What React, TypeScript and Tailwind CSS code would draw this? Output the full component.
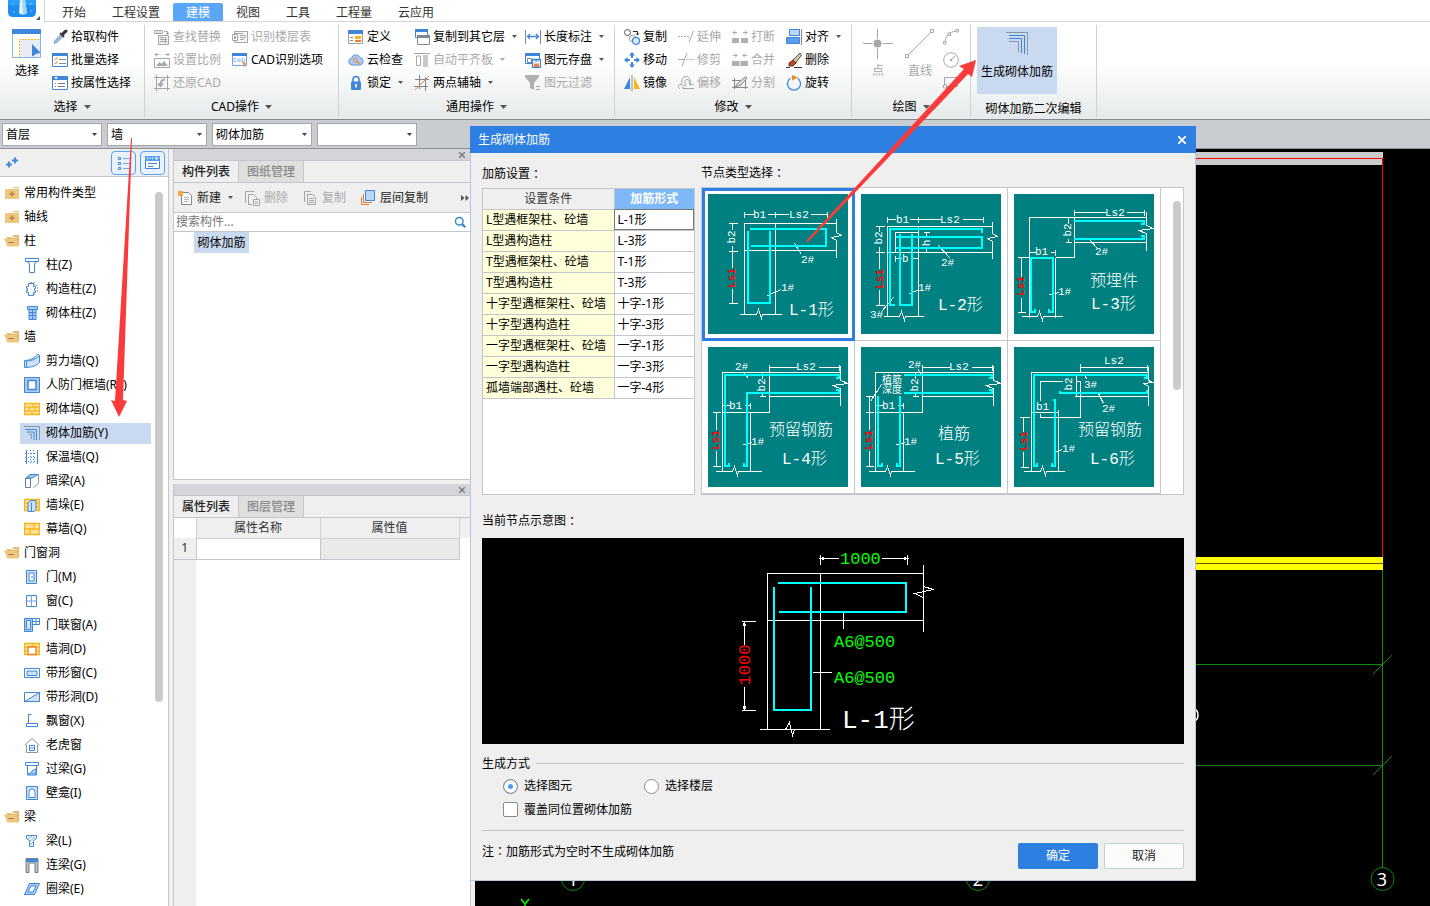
import React from "react";

type Kids = { children?: React.ReactNode };

const B = "#3f86d8";
const G = "#a6a6a6";
const D = "#7d8a94";
const Y = "#fbb416";

function Ic({ children, size = "size-4" }: Kids & { size?: string }) {
  return (
    <svg viewBox="0 0 16 16" className={`${size} shrink-0`} fill="none" aria-hidden="true">
      {children}
    </svg>
  );
}

function Caret({ color = "#555", size = "h-1 w-[7px]" }: { color?: string; size?: string }) {
  return (
    <svg viewBox="0 0 7 4" className={`shrink-0 ${size}`} aria-hidden="true">
      <path d="M0 0h7L3.500 4z" fill={color} />
    </svg>
  );
}

function Colon() {
  return <span className="font-['Noto_Sans_CJK_TC',sans-serif]">：</span>;
}

/* ---------- ribbon icons ---------- */

const icons = {
  pick: (
    <Ic>
      <path d="M2 14.500l1-3 6-6 2 2-6 6z" fill="#8fc0f0" stroke="#7a8fa5" strokeWidth=".8" />
      <path d="M8 4l4 4M10 5.500l3-3.500" stroke="#444" strokeWidth="2" />
      <path d="M11 5l3-3" stroke="#333" strokeWidth="3" strokeLinecap="round" />
    </Ic>
  ),
  batch: (
    <Ic>
      <path d="M.5 1.500h15v13H.5z" fill="#fff" stroke={B} />
      <path d="M0 1h16v3H0z" fill={B} />
      <path d="M2.500 6.500l1 1.500 2-2.500M2.500 10.500l1 1.500 2-2.500" stroke="#e88a24" />
      <path d="M7 7.500h7M7 11.500h7" stroke="#888" />
    </Ic>
  ),
  attr: (
    <Ic>
      <path d="M.5 1.500h15v13H.5z" fill="#fff" stroke={B} />
      <path d="M0 1h16v4H0z" fill={B} />
      <path d="M2 2h4L4 4.500z" fill="#fff" />
      <path d="M3 8.500h1M6 8.500h7M3 11.500h1M6 11.500h7" stroke="#777" />
    </Ic>
  ),
  find: (
    <Ic>
      <path d="M.5 1.500h8v3h-8zM3 2v2M6 2v2M10 2.500h3.500v3M12 4l1.500 1.500L15 4" stroke={G} />
      <path d="M4.500 6.500h10v9h-10z" fill="#eee" stroke={G} />
      <path d="M6 8.500h4M6 10.500h7M6 12.500h7M11.500 8v6" stroke={G} />
    </Ic>
  ),
  scale: (
    <Ic>
      <path d="M.5 6.500h15v9H.5zM1 2.500h4M11 2.500h4M2.500 1L1 2.500 2.500 4M13.500 1L15 2.500 13.500 4" stroke={G} />
      <path d="M2 14l3.500-4 2 2 2.500-3 4 5z" fill={G} />
    </Ic>
  ),
  restore: (
    <Ic>
      <path d="M2.500 0v16M13.500 0v16M0 2.500h16M0 13.500h16" stroke={G} />
      <path d="M11 4.500C7 4.500 6.500 7 6.500 10M4 8.500L6.500 11 9 8.500" stroke={G} strokeWidth="1.800" />
    </Ic>
  ),
  floorTable: (
    <Ic>
      <path d="M2.500 2.500h13v11h-13z" fill="#f6f6f6" stroke={G} />
      <path d="M.5 5.500h5v6h-5z" fill="#fff" stroke={G} />
      <path d="M2 7h2v3H2z" fill={G} />
      <path d="M8 6.500h6M8 8.500h6M8 10.500h4M3 4.500h8" stroke={G} />
    </Ic>
  ),
  cadOpt: (
    <Ic>
      <path d="M.5 1.500h14v12H.5z" fill="#fff" stroke="#6da7e8" />
      <path d="M0 1h15v3H0z" fill={B} />
      <path d="M4.500 6.500H2v3h2.500M6 10V7.500l1-1 1 1V10M6 9h2M10 6.500v3.500h1.500l1-1V7.500l-1-1z" stroke="#7fb2ec" strokeWidth=".9" />
      <path d="M10 9l5 3-2 .7.500 2.300-2-1z" fill="#f08a55" />
    </Ic>
  ),
  define: (
    <Ic>
      <path d="M.5 1.500h14v13H.5z" fill="#fff" stroke="#9aa3ab" />
      <path d="M0 1h15v4H0z" fill={B} />
      <path d="M2 8.500h3M2 11.500h3" stroke="#7d8a94" />
      <path d="M7 7h6v3H7z" fill={Y} />
      <path d="M7 11h6v2H7z" fill="#f07e2b" />
    </Ic>
  ),
  cloud: (
    <Ic>
      <path d="M4 13a3.500 3.500 0 01-.5-6.900 4.500 4.500 0 018.500-.6A3.800 3.800 0 0112 13z" fill="#a9cdf5" stroke="#5b9be6" />
      <circle cx="7.500" cy="8" r="2" stroke="#f0823a" />
      <path d="M9 9.500l3 3" stroke="#f0823a" strokeWidth="1.300" />
    </Ic>
  ),
  lock: (
    <Ic>
      <path d="M5 7V4.500a3 3 0 016 0V7" stroke={B} strokeWidth="1.600" />
      <rect x="3" y="6.500" width="10" height="8.500" rx="1" fill={B} />
      <path d="M8 9v3.500" stroke="#fff" strokeWidth="1.600" />
    </Ic>
  ),
  copyFloor: (
    <Ic>
      <path d="M1.500.5h12v8h-12z" fill="#fff" stroke={B} />
      <path d="M1 0h13v3H1z" fill={B} />
      <path d="M3.500 6.500h12v9h-12z" fill="#fff" stroke={D} />
      <path d="M3 6h13v3H3z" fill={D} />
    </Ic>
  ),
  alignSlab: (
    <Ic>
      <path d="M0 1.500h16M2.500 4v9.500h4V4z" stroke={G} />
      <path d="M9 3h5v12H9z" fill="#c9c9c9" />
    </Ic>
  ),
  axis: (
    <Ic>
      <path d="M5.500 0v14M11.500 2v14M1 4.500h14M0 11.500h14" stroke={D} />
      <path d="M1 15L15 1" stroke="#f0823a" />
    </Ic>
  ),
  length: (
    <Ic>
      <path d="M.5 1v14M15.500 1v14" stroke={D} />
      <path d="M2 7.500h12M5 5L2.500 7.500 5 10M11 5l2.500 2.500L11 10" stroke={B} strokeWidth="1.300" />
    </Ic>
  ),
  save: (
    <Ic>
      <path d="M.5 1.500h14v10H.5z" fill="#fff" stroke={B} />
      <path d="M0 1h15v3H0z" fill={B} />
      <path d="M2.500 6.500h4v4h-4z" stroke={D} />
      <path d="M7.500 7.500h8v8h-8z" fill="#fff" stroke={B} strokeWidth="1.300" />
      <path d="M9 11.500h5V15H9z" fill="#f0823a" />
      <path d="M9.500 9h4" stroke={B} />
    </Ic>
  ),
  filter: (
    <Ic>
      <path d="M0 0h14v2L9 8v7l-4-2V8L0 2z" fill="#b0b0b0" />
      <path d="M11 11.500h4M11 14.500h4" stroke={G} />
    </Ic>
  ),
  copy: (
    <Ic>
      <circle cx="3.500" cy="3.500" r="3" stroke="#555" />
      <circle cx="8.500" cy="9.500" r="3.200" stroke="#999" />
      <circle cx="12" cy="11.800" r="3.500" fill="#d8eaff" stroke={B} strokeWidth="1.200" />
      <path d="M9 2.500h4.500V6M12 4.500L13.500 6 15 4.500" stroke="#222" />
    </Ic>
  ),
  move: (
    <Ic>
      <path d="M8 2v4M8 10v4M2 8h4M10 8h4" stroke={B} strokeWidth="2" />
      <path d="M8 0l3 3.500H5zM8 16l3-3.500H5zM0 8l3.500-3v6zM16 8l-3.500-3v6z" fill={B} />
    </Ic>
  ),
  mirror: (
    <Ic>
      <path d="M6 2v12H0z" fill={B} />
      <path d="M10 2v12h6z" fill={Y} />
      <path d="M8 0v16" stroke="#888" />
    </Ic>
  ),
  extend: (
    <Ic>
      <path d="M0 7.500h2M3 7.500h2M6 7.500h2M9 7.500h2M15.500 2L11 13" stroke={G} />
    </Ic>
  ),
  trim: (
    <Ic>
      <path d="M0 7.500h6M8.500 7.500h2M11.500 7.500h2M14.500 7.500h2M9 1L4 14" stroke={G} />
    </Ic>
  ),
  offset: (
    <Ic>
      <path d="M2 13.500C0 13.500 0 9.500 2 9.500h2C3 4 5 1.500 8 1.500S13 4 12 9.500M5 13.500h11M5 13.500c-1-3 1-3 2.500-3C6.500 6 7 4.500 9 4.500s3 2 2.500 5h4" stroke={G} />
    </Ic>
  ),
  brk: (
    <Ic>
      <path d="M0 9h7v5H0zM9 9h7v5H9z" fill="#b0b0b0" />
      <path d="M1 3.500h4M11 3.500h4M3 1.500L1 3.500l2 2M13 1.500l2 2-2 2" stroke={G} />
    </Ic>
  ),
  merge: (
    <Ic>
      <path d="M0 9h7.500v5H0zM8.500 9H16v5H8.500z" fill="#b0b0b0" />
      <path d="M1 3.500h4M11 3.500h4M3 1.500l2 2-2 2M13 1.500l-2 2 2 2" stroke={G} />
    </Ic>
  ),
  split: (
    <Ic>
      <path d="M2.500 3v11M13.500 5v9M0 5.500h12M0 12.500h16" stroke="#888" />
      <path d="M3 12l3-4 7-6 2 1-6 7z" fill="#ddd" stroke="#888" />
    </Ic>
  ),
  align: (
    <Ic>
      <path d="M3.500.500h10v6h-10z" fill="#b8d6f8" stroke={B} />
      <path d="M.5 8.500h13v6H.5z" fill="#5a9fea" stroke={B} />
      <path d="M15.500 0v16" stroke={D} />
    </Ic>
  ),
  erase: (
    <Ic>
      <path d="M6 9l8-8 1.500 2L9 12z" fill="#d8c7a0" stroke="#333" strokeWidth=".8" />
      <path d="M3 11l4-3 3 3-3 3-4 0z" fill="#c7481b" stroke="#40200c" strokeWidth=".8" />
      <path d="M0 15.500h4M8 15.500h8" stroke="#333" />
    </Ic>
  ),
  rotate: (
    <Ic>
      <path d="M4 3.500a6.500 6.500 0 108 0" stroke={B} strokeWidth="1.300" />
      <path d="M4 3.500A6.500 6.500 0 0112 3.500" stroke="#9cc6f5" />
      <path d="M6 0l6 2.500L6 5.500z" fill="#f08a24" />
    </Ic>
  ),
  arc: (
    <Ic>
      <path d="M2 13C2.500 7 6 3 13 2" stroke={G} />
      <path d="M.5 12.500h2.500v2.500H.5zM5 4h2.500v2.500H5zM13 .5h2.500V3H13z" fill="#fff" stroke={G} />
    </Ic>
  ),
  circle: (
    <Ic>
      <circle cx="8" cy="8" r="7.300" stroke={G} />
      <path d="M8 8l4-4" stroke={G} />
      <path d="M7 7h2v2H7z" fill={G} />
    </Ic>
  ),
  rect: (
    <Ic>
      <path d="M1.500 2.500h13v9h-13z" stroke={G} />
      <path d="M.5 10h3v3h-3z" fill="#fff" stroke={G} />
    </Ic>
  ),
};

type IconName = keyof typeof icons;

function Tool({ icon, label, off, arrow }: { icon: IconName; label?: string; off?: boolean; arrow?: boolean }) {
  return (
    <button type="button" disabled={off} className={`flex h-[23px] items-center gap-[3px] whitespace-nowrap ${off ? "text-[#a9a9a9]" : "text-black"}`}>
      {icons[icon]}
      {label && <span>{label}</span>}
      {arrow && (
        <span className="ml-1 flex">
          <Caret color={off ? "#aaa" : "#555"} size="h-[3px] w-[5px]" />
        </span>
      )}
    </button>
  );
}

function Group({ label, width, pad, children, caret = true }: Kids & { label: string; width: string; pad: string; caret?: boolean }) {
  return (
    <section className={`flex shrink-0 flex-col border-r border-[#cfd1d3] ${width}`}>
      <div className={`flex h-[69px] ${pad}`}>{children}</div>
      <div className={`flex h-6 items-center justify-center gap-1.5 ${caret ? "pt-0.5" : "pt-1.5"}`}>
        <span>{label}</span>
        {caret && <Caret />}
      </div>
    </section>
  );
}

function Ribbon() {
  return (
    <div className="flex h-[98px] shrink-0 overflow-hidden border-b border-[#85888c] bg-linear-to-b from-white from-40% to-[#e6eaea] pt-[3px] pb-0.5">
      <Group label="选择" width="w-[145px]" pad="gap-2.5 pl-3">
        <button type="button" className="flex w-[30px] flex-col items-center gap-1 pt-1">
          <svg viewBox="0 0 30 30" className="size-[30px]" aria-hidden="true">
            <path d="M.5.5h28v28H.5z" fill="#fff" stroke="#86b3e6" />
            <path d="M0 0h29v5H0z" fill={B} />
            <path d="M8 11h20v17H8z" fill="#e9edf6" />
            <path d="M7.500 29V10.500H28" fill="none" stroke={Y} strokeDasharray="2 1" />
            <path d="M20 15l9 9-4 .5-5 3z" fill={B} />
          </svg>
          <span>选择</span>
        </button>
        <div>
          <Tool icon="pick" label="拾取构件" />
          <Tool icon="batch" label="批量选择" />
          <Tool icon="attr" label="按属性选择" />
        </div>
      </Group>
      <Group label="CAD操作" width="w-[194px]" pad="gap-[11px] pl-[9px]">
        <div>
          <Tool icon="find" label="查找替换" off />
          <Tool icon="scale" label="设置比例" off />
          <Tool icon="restore" label="还原CAD" off />
        </div>
        <div>
          <Tool icon="floorTable" label="识别楼层表" off />
          <Tool icon="cadOpt" label="CAD识别选项" />
        </div>
      </Group>
      <Group label="通用操作" width="w-[276px]" pad="pl-[9px]">
        <div className="w-[66px]">
          <Tool icon="define" label="定义" />
          <Tool icon="cloud" label="云检查" />
          <Tool icon="lock" label="锁定" arrow />
        </div>
        <div className="w-[111px]">
          <Tool icon="copyFloor" label="复制到其它层" arrow />
          <Tool icon="alignSlab" label="自动平齐板" off arrow />
          <Tool icon="axis" label="两点辅轴" arrow />
        </div>
        <div>
          <Tool icon="length" label="长度标注" arrow />
          <Tool icon="save" label="图元存盘" arrow />
          <Tool icon="filter" label="图元过滤" off />
        </div>
      </Group>
      <Group label="修改" width="w-[237px]" pad="gap-[11px] pl-[9px]">
        <div>
          <Tool icon="copy" label="复制" />
          <Tool icon="move" label="移动" />
          <Tool icon="mirror" label="镜像" />
        </div>
        <div>
          <Tool icon="extend" label="延伸" off />
          <Tool icon="trim" label="修剪" off />
          <Tool icon="offset" label="偏移" off />
        </div>
        <div>
          <Tool icon="brk" label="打断" off />
          <Tool icon="merge" label="合并" off />
          <Tool icon="split" label="分割" off />
        </div>
        <div>
          <Tool icon="align" label="对齐" arrow />
          <Tool icon="erase" label="删除" />
          <Tool icon="rotate" label="旋转" />
        </div>
      </Group>
      <Group label="绘图" width="w-[119px]" pad="pl-[11px]">
        <button type="button" disabled className="mr-3 flex w-[30px] flex-col items-center gap-1 pt-1 text-[#a9a9a9]">
          <svg viewBox="0 0 30 30" className="size-[30px]" aria-hidden="true">
            <path d="M0 14.500h30M14.500 0v30" stroke={G} />
            <circle cx="14.500" cy="14.500" r="4.500" fill={G} stroke="#fff" />
          </svg>
          <span>点</span>
        </button>
        <button type="button" disabled className="mr-2 flex w-[30px] flex-col items-center gap-1 pt-1 text-[#a9a9a9]">
          <svg viewBox="0 0 30 30" className="size-[30px]" fill="none" aria-hidden="true">
            <path d="M3 26L26 3" stroke={G} />
            <path d="M.5 25.500h3v3h-3zM25.500.5h3v3h-3z" fill="#fff" stroke={G} />
          </svg>
          <span>直线</span>
        </button>
        <div>
          <Tool icon="arc" off />
          <Tool icon="circle" off />
          <Tool icon="rect" off />
        </div>
      </Group>
      <Group label="砌体加筋二次编辑" width="w-[126px]" pad="pt-0.5 pl-1.5" caret={false}>
        <button type="button" className="flex h-[67px] w-20 flex-col items-center gap-2 bg-[#c9d9ef] pt-[5px] text-black">
          <svg viewBox="0 0 24 24" className="size-6" fill="none" aria-hidden="true">
            <path d="M1 .5h21.500V23M4 9.500h9.500V20" stroke="#8795a5" />
            <path d="M4 3.500h15.500V22M4 6.500h12.500V21" stroke={B} />
          </svg>
          <span>生成砌体加筋</span>
        </button>
      </Group>
    </div>
  );
}

/* ---------- component tree ---------- */

const brick = (
  <>
    <path d="M.5 2.500h15v11H.5z" fill="#ffe2a0" stroke={Y} strokeWidth="1.400" />
    <path d="M0 6.200h16M0 9.800h16M9 2.500v3.700M5 6.200v3.600M11 6.200v3.600M8 9.800v3.700" stroke={Y} strokeWidth="1.200" />
  </>
);

const treeIcons: Record<string, React.ReactNode> = {
  column: <path d="M1.500 1.500h13v3h-13zM3 4.500h10l-2.500 2v9h-5v-9z" fill="#fff" stroke={B} />,
  tie: (
    <>
      <path d="M6 1.500h5v3h2.500v6H11v3H6" stroke="#aaa" strokeDasharray="2 1" />
      <path d="M4.500 2.500h5v3h2v2h-1v2h1v2h-2v3h-5v-3h-2v-2h1v-2h-1v-2h2z" fill="#fff" stroke={B} />
    </>
  ),
  brickCol: (
    <>
      <path d="M3.500 1.500h10v3h-10zM5 4.500h7v10H5z" fill="#a9cbf3" stroke={B} />
      <path d="M5 7.500h7M5 10.500h7M8.500 5v10" stroke={B} />
    </>
  ),
  shear: (
    <>
      <path d="M.5 7.500C6 7.500 11 5 13.500 1l2 1.500V9C13 13 7 14.500.5 14.500z" fill="#cfe2fa" stroke={B} />
      <path d="M2.500 8v6.500M2.500 8C8 8 12 6 15.500 2.500" stroke={B} />
    </>
  ),
  frame: (
    <>
      <path d="M.5.500h15v15H.5z" fill="#a9cbf3" stroke={B} />
      <path d="M4 3.500h8v9H4z" fill="#fff" stroke={B} strokeWidth="1.500" />
    </>
  ),
  brick,
  rebar: (
    <>
      <path d="M0 1.500h15.500V15M5 9.500h2.500V14" stroke="#8795a5" />
      <path d="M1 4.500h11.500V15M3 7h7v8" stroke={B} />
    </>
  ),
  insul: (
    <>
      <path d="M2.500 1v14M13.500 1v14" stroke={B} />
      <path d="M6.500 1v14M9.500 1v14" stroke={B} strokeDasharray="1 2" />
      <path d="M1 4.500h14M1 8.500h14M1 12.500h14" stroke={B} strokeDasharray="1 2" />
    </>
  ),
  hidden: (
    <>
      <path d="M1.500 5.500l5-4h8v9l-5 4" stroke="#8795a5" />
      <path d="M1.500 5.500h5v9h-5z" fill="#fff" stroke="#6b7f94" />
      <path d="M2 5l4-3.500h8L8 5z" fill="#a9cbf3" stroke={B} />
    </>
  ),
  pier: (
    <>
      {brick}
      <path d="M4 5.500l3-2h5v9l-2 2H4z" fill="#cfe2fa" stroke={B} />
      <path d="M7.500 5.500v9" stroke={B} />
    </>
  ),
  curtain: (
    <>
      <path d="M.5 2.500h15v11H.5z" fill="#ffe2a0" stroke={Y} strokeWidth="1.400" />
      <path d="M0 8h16M10 2.500V8M6 8v5.500" stroke={Y} strokeWidth="1.400" />
    </>
  ),
  door: (
    <>
      <path d="M2.500 1.500h10v13h-10z" fill="#cfe2fa" stroke={B} />
      <path d="M5 4h5v8H5z" fill="#fff" stroke={B} />
      <path d="M8 7v2" stroke={B} />
    </>
  ),
  window: (
    <>
      <path d="M2.500 2.500h10v11h-10z" fill="#fff" stroke={B} />
      <path d="M7.500 2.500v11M2.500 8h10" stroke="#6da7e8" />
    </>
  ),
  doorWin: (
    <>
      <path d="M.5 1.500h8v13h-8z" fill="#a9cbf3" stroke={B} />
      <path d="M2.500 3.500h4v9h-4z" fill="#dbe9fb" stroke={B} />
      <path d="M8.500 1.500h7v6h-7M12 1.500v6M8.500 4.500h7" stroke={B} />
    </>
  ),
  wallHole: (
    <>
      {brick}
      <path d="M4 6h8v7.500H4z" fill="#fff" stroke="#f07e2b" strokeWidth="1.300" />
    </>
  ),
  strip: (
    <>
      <path d="M.5 3.500h15v9H.5z" fill="#fff" stroke={B} />
      <path d="M3 6h10v4.500H3z" fill="#cfe2fa" stroke={B} />
    </>
  ),
  stripHole: (
    <>
      <path d="M.5 3.500h15v9H.5z" fill="#fff" stroke={B} />
      <path d="M.5 12.500l15-9v9z" fill="#cfe2fa" stroke={B} />
    </>
  ),
  bay: <path d="M7.500 1.500h-3v9h-2v3h11v-3h-9" stroke={B} />,
  dormer: (
    <>
      <path d="M.5 8.500L8 1.500l7.500 7M2.500 8v7.500h11V8" stroke="#8795a5" />
      <path d="M5.500 8.500h5v5h-5zM5.500 11h5" fill="#fff" stroke={B} />
    </>
  ),
  lintel: (
    <>
      <path d="M1.500 1.500h13v3h-13zM3.500 4.500h9v9.500h-9z" fill="#fff" stroke={B} />
      <path d="M4 13c3 0 3-4 8-5v5z" fill="#a9cbf3" stroke={B} />
    </>
  ),
  niche: (
    <>
      <path d="M2.500 1.500h11v13h-11z" fill="#cfe2fa" stroke={B} />
      <path d="M5 12.500V7a3 3 0 016 0v5.500z" fill="#fff" stroke={B} />
    </>
  ),
  beam: (
    <>
      <path d="M2.500 2.500h10v3l-3 2v6h-4v-6l-3-2z" fill="#fff" stroke={B} />
      <path d="M4 6l4-3M6 8l5-4M6 12l3-3" stroke="#6da7e8" />
    </>
  ),
  coupling: (
    <>
      <path d="M2 1.500h12v14h-3V6H5v9.500H2z" fill="#b9bfc5" stroke="#77828c" />
      <path d="M2 2h12v3H2z" fill={B} />
    </>
  ),
  ring: (
    <>
      <path d="M5.500 2.500h10l-5 11H.5z" fill="#a9cbf3" stroke={B} />
      <path d="M7 5h5l-3 6H4z" fill="#fff" stroke={B} />
    </>
  ),
};

type Node = { label: string; icon?: string; state?: "open" | "closed"; active?: boolean };

const tree: Node[] = [
  { label: "常用构件类型", state: "closed" },
  { label: "轴线", state: "closed" },
  { label: "柱", state: "open" },
  { label: "柱(Z)", icon: "column" },
  { label: "构造柱(Z)", icon: "tie" },
  { label: "砌体柱(Z)", icon: "brickCol" },
  { label: "墙", state: "open" },
  { label: "剪力墙(Q)", icon: "shear" },
  { label: "人防门框墙(RF)", icon: "frame" },
  { label: "砌体墙(Q)", icon: "brick" },
  { label: "砌体加筋(Y)", icon: "rebar", active: true },
  { label: "保温墙(Q)", icon: "insul" },
  { label: "暗梁(A)", icon: "hidden" },
  { label: "墙垛(E)", icon: "pier" },
  { label: "幕墙(Q)", icon: "curtain" },
  { label: "门窗洞", state: "open" },
  { label: "门(M)", icon: "door" },
  { label: "窗(C)", icon: "window" },
  { label: "门联窗(A)", icon: "doorWin" },
  { label: "墙洞(D)", icon: "wallHole" },
  { label: "带形窗(C)", icon: "strip" },
  { label: "带形洞(D)", icon: "stripHole" },
  { label: "飘窗(X)", icon: "bay" },
  { label: "老虎窗", icon: "dormer" },
  { label: "过梁(G)", icon: "lintel" },
  { label: "壁龛(I)", icon: "niche" },
  { label: "梁", state: "open" },
  { label: "梁(L)", icon: "beam" },
  { label: "连梁(G)", icon: "coupling" },
  { label: "圈梁(E)", icon: "ring" },
  { label: "", state: "closed" },
];

function Folder({ open }: { open: boolean }) {
  return (
    <Ic>
      {open ? (
        <>
          <path d="M3 4h5l1.500-2H15v11H3z" fill="#e0b468" />
          <path d="M9 3.500h5v1.500H5" fill="#fff" stroke="#e0b468" strokeWidth=".8" />
          <path d="M0 5.500h12.500l2.500 8H3.500z" fill="#efc67c" />
          <path d="M4.500 9.500h5" stroke="#9c7a33" />
        </>
      ) : (
        <>
          <path d="M1 4h7l1.500-2H15v12H1z" fill="#efc67c" />
          <path d="M7 3.500h8" stroke="#fff" strokeWidth=".8" />
          <path d="M8 6.500v5M5.500 9h5" stroke="#a8843c" strokeWidth="1.400" />
        </>
      )}
    </Ic>
  );
}

function Tree() {
  return (
    <aside className="flex w-[169px] shrink-0 flex-col overflow-hidden border-r border-[#c3c6cc] bg-white">
      <div className="flex h-7 shrink-0 items-center gap-1 border-b border-[#c3c6cc] bg-[#efefef] pr-[3px] pl-1">
        <Ic>
          <path d="M2 9.500h6M5 6.500v6M8 5.500h6M11 2.500v6" stroke={B} strokeWidth="1.800" />
        </Ic>
        <button type="button" className="ml-auto flex h-6 w-[25px] items-center justify-center rounded-sm border border-[#5aa2f2] bg-[#e8f2fd]">
          <Ic>
            <path d="M2.500 2.500h2v2h-2zM2.500 7.500h2v2h-2zM2.500 12.500h2v2h-2z" stroke={B} />
            <path d="M7 3.500h8M7 8.500h8M7 13.500h8" stroke="#6da7e8" />
          </Ic>
        </button>
        <button type="button" className="flex h-6 w-[25px] items-center justify-center rounded-sm border border-[#5aa2f2] bg-[#e8f2fd]">
          <Ic>
            <path d="M.5 1.500h14v12H.5z" fill="#fff" stroke={B} />
            <path d="M0 1h15v5H0z" fill="#5a9fea" />
            <path d="M2 2.500h1V4H2zM4.500 2.500h1V4h-1zM7 2.500h1V4H7zM9.500 2.500h4l-2 2.500z" fill="#fff" />
            <path d="M3 8.500h9M3 11.500h5" stroke={B} />
          </Ic>
        </button>
      </div>
      <div className="flex min-h-0 flex-1 overflow-hidden">
        <ul className="min-w-0 flex-1 pt-1">
          {tree.map((n, i) =>
            n.state ? (
              <li key={i} className="flex h-6 items-center gap-1 pl-1 text-black">
                <Folder open={n.state === "open"} />
                <span>{n.label}</span>
              </li>
            ) : (
              <li key={i} className="flex h-6 items-center pr-1 pl-5">
                <button type="button" className={`flex h-[21px] w-full items-center gap-1.5 pl-1 whitespace-nowrap text-black ${n.active ? "bg-[#c9d9ef]" : ""}`}>
                  <Ic>{treeIcons[n.icon as string]}</Ic>
                  <span>{n.label}</span>
                </button>
              </li>
            ),
          )}
        </ul>
        <div className="mt-[15px] mr-[5px] h-[510px] w-2 shrink-0 rounded-full bg-[#cbcbcb]" />
      </div>
    </aside>
  );
}

/* ---------- list and property panels ---------- */

function Cross() {
  return (
    <svg viewBox="0 0 6 6" className="size-1.5" aria-hidden="true">
      <path d="M0 0l6 6M6 0L0 6" stroke="#777" strokeWidth="1.300" />
    </svg>
  );
}

function PanelHead({ tabs }: { tabs: [string, string] }) {
  return (
    <>
      <div className="flex h-3 shrink-0 items-center justify-end border-b border-[#c3c6cc] bg-[#d4d5da] pr-[5px]">
        <button type="button" className="flex">
          <Cross />
        </button>
      </div>
      <div className="flex h-[22px] shrink-0 border-b border-[#c3c6cc] bg-[#efefef] font-medium">
        <button type="button" className="w-[65px] border-r border-[#c3c6cc] text-[#222]">{tabs[0]}</button>
        <button type="button" className="w-[65px] border-r border-[#c3c6cc] bg-[#dfdfdf] text-[#8a8a8a]">{tabs[1]}</button>
      </div>
    </>
  );
}

function Middle() {
  return (
    <div className="ml-1 flex w-[298px] shrink-0 flex-col gap-1">
      <section className="flex h-[331px] shrink-0 flex-col border border-t-0 border-[#c3c6cc] bg-white">
        <PanelHead tabs={["构件列表", "图纸管理"]} />
        <div className="flex h-[30px] shrink-0 items-center border-b border-[#c3c6cc] bg-[#efefef] pl-1 text-[#a9a9a9]">
          <button type="button" className="flex items-center gap-[3px] text-[#222]">
            <Ic>
              <path d="M3.500 2.500h7l3 3v9h-10z" fill="#fff" stroke={D} />
              <path d="M6 7.500h5M6 9.500h5M6 11.500h5" stroke="#bbb" />
              <path d="M0 1h5v5H0z" fill="#f6a640" />
            </Ic>
            新建
            <span className="ml-1 flex">
              <Caret size="h-[3px] w-[5px]" />
            </span>
          </button>
          <button type="button" disabled className="ml-3 flex items-center gap-[3px]">
            <Ic>
              <path d="M.5 13V1.500H9M3.500 15V4.500h5l3 3V9M3.500 14.500H7" stroke={G} />
              <path d="M8.500 9.500h6v6h-6zM10 11l3 3M13 11l-3 3" stroke={G} />
            </Ic>
            删除
          </button>
          <button type="button" disabled className="ml-[15px] flex items-center gap-[3px]">
            <Ic>
              <path d="M1.500 12V1.500H8M4.500 4.500h5l3 3v7h-8z" stroke={G} />
              <path d="M6 8.500h5M6 10.500h5M6 12.500h5" stroke={G} />
            </Ic>
            复制
          </button>
          <button type="button" className="ml-[15px] flex items-center gap-[3px] text-[#222]">
            <Ic>
              <path d="M4.500.500h9v10h-9z" fill="#b8d6f8" stroke={B} />
              <path d="M2.500 4v8.500H11M.5 7v7.500H8" stroke="#f07e2b" />
            </Ic>
            层间复制
          </button>
          <svg viewBox="0 0 8 6" className="mr-px ml-auto h-1.5 w-2" aria-hidden="true">
            <path d="M0 0l3.500 3L0 6zM4.500 0L8 3 4.500 6z" fill="#555" />
          </svg>
        </div>
        <div className="flex h-[19px] shrink-0 items-center border-b border-[#c3c6cc] pr-1 pl-0.5">
          <input aria-label="搜索构件..." placeholder="搜索构件..." className="h-4 min-w-0 flex-1 outline-none placeholder:text-[#777]" />
          <Ic size="size-3">
            <circle cx="7" cy="7" r="5" stroke="#2a86cc" strokeWidth="1.800" />
            <path d="M10.500 10.500l4.500 4.500" stroke="#2a86cc" strokeWidth="3" />
          </Ic>
        </div>
        <button type="button" className="ml-5 h-[21px] w-[55px] bg-[#c9d9ef] text-black">砌体加筋</button>
      </section>
      <section className="flex min-h-0 flex-1 flex-col border-x border-[#c3c6cc] bg-white">
        <PanelHead tabs={["属性列表", "图层管理"]} />
        <div className="flex flex-1 bg-linear-to-r from-[#efefef] from-[22px] to-white to-[22px]">
          <table className="h-[41px] w-full table-fixed border-collapse text-center text-[#333]">
            <colgroup>
              <col className="w-[22px]" />
              <col className="w-[124px]" />
              <col className="w-[139px]" />
              <col />
            </colgroup>
            <thead>
              <tr className="h-5 bg-[#efefef]">
                <th className="bg-white" />
                <th className="border border-t-0 border-[#cfd1d5] p-0 font-normal">属性名称</th>
                <th className="border border-t-0 border-[#cfd1d5] p-0 font-normal">属性值</th>
                <th />
              </tr>
            </thead>
            <tbody>
              <tr className="h-[21px]">
                <td className="border-b border-[#c3c6cc] bg-[#efefef] p-0">1</td>
                <td className="border border-[#c3c6cc] bg-white p-0" />
                <td className="border border-[#c3c6cc] bg-[#e9e9e9] p-0" />
                <td className="bg-white" />
              </tr>
            </tbody>
          </table>
        </div>
      </section>
    </div>
  );
}

/* ---------- drawing area ---------- */

function Canvas() {
  return (
    <div className="ml-1 min-w-0 flex-1 overflow-hidden bg-black">
      <svg className="size-full" fill="none" aria-hidden="true">
        <g transform="translate(-475 -149)">
          <path d="M475 152h908v13H475z" fill="#cbcbcb" />
          <path d="M475 158.500h907.500V557" stroke="#f00" />
          <path d="M475 557h908v13H475z" fill="#ff0" />
          <path d="M475 563.500h908" stroke="#7a4a00" />
          <g stroke="#0a8a0a">
            <path d="M1382.500 570v297M475 664.500h908M475 765.500h908M1373 674l19-19M1373 775l19-19" />
            <circle cx="573" cy="879" r="11.500" />
            <circle cx="978" cy="879" r="11.500" />
            <circle cx="1382.500" cy="879" r="11.500" />
          </g>
          <path d="M1194 709q4 1 4 6t-4 6" stroke="#fff" strokeWidth="1.500" />
          <g fill="#fff" fontSize="18" textAnchor="middle" className="font-['Noto_Sans']">
            <text x="573" y="886">1</text>
            <text x="978" y="886">2</text>
            <text x="1382" y="886">3</text>
          </g>
          <path d="M521 899l4 5 4-5M525 904v3" stroke="#0f0" strokeWidth="1.500" />
        </g>
      </svg>
    </div>
  );
}

/* ---------- node drawings ---------- */

type Label = [x: number, y: number, text: string];

const vText = (x: number, y: number, text: string, fill: string, weight = "400") => (
  <text key={text} x={x} y={y} transform={`rotate(-90 ${x} ${y})`} textAnchor="middle" dominantBaseline="central" fill={fill} fontWeight={weight} fontSize="11">
    {text}
  </text>
);

type Drawing = {
  name: string;
  white: string;
  cyan: string;
  small: Label[];
  vertical: Label[];
  red: [number, number];
  title: Label[];
  tiny?: Label[];
};

const drawings: Drawing[] = [
  {
    name: "L-1形",
    white:
      "M36 17v6M67 17v6M119 17v6M36 20h9M59 20h21M102 20h17M36 120V29H128M67 29V120M36 56H128M128 24v14l5 3-10 2 5 3v17M31 120h17l2-5 3 9 1-4h19M20 29h9M20 57h9M20 109h9M24 29v6M24 51v22M24 94v15M86 49l7 11M59 101l14-6",
    cyan: "M42 35H118V52H43M40 37V109H62V37",
    small: [[45, 24, "b1"], [81, 24, "Ls2"], [93, 69, "2#"], [73, 97, "1#"]],
    vertical: [[24, 43, "b2"]],
    red: [24, 84],
    title: [[81, 121, "L-1形"]],
  },
  {
    name: "L-2形",
    white:
      "M26 22v6M57 22v6M122 22v6M26 25h8M48 25h31M101 25h21M26 122V32H131M57 32V122M26 58H131M131 27v12l5 3-10 2 5 3v17M22 122h16l2-5 3 9 1-4h18M14 32h9M14 58h9M14 111h9M18 32v5M18 52v22M18 95v16M34 58V38H57M62 38h6M62 58h6M65 38v5M65 54v4M34 61v6M34 64h6M49 64h8M77 51l12 13M48 99l10-4M32 103L20 117",
    cyan: "M34 111H29V35H121V39M35 43H121V54H35M39 40V111H51V40",
    small: [[35, 29, "b1"], [79, 29, "Ls2"], [80, 72, "2#"], [57, 97, "1#"], [9, 124, "3#"], [41, 68, "b"]],
    vertical: [[18, 44, "b2"], [66, 49, "h"]],
    red: [19, 85],
    title: [[77, 116, "L-2形"]],
  },
  {
    name: "L-3形",
    white:
      "M60 15v6M130 15v6M60 18h31M112 18h18M15 123V23H132M60 23V63H41M15 63h-4M60 48H132M132 17v14l7 3-15 2 8 3v17M41 63V123M7 122h16l2-5 3 9 1-4h19M15 55v6M41 55v6M15 58h6M36 58h5M54 23v6M54 44v4M51 48h6M3 63h8M3 118h8M7 63v19M7 103v15M35 100l10-2M74 44l9 10",
    cyan: "M60 27H130V30H127M60 45H130V42H127M21 115V118H17V64H39V118H35V115",
    small: [[91, 22, "Ls2"], [21, 61, "b1"], [44, 101, "1#"], [81, 61, "2#"]],
    vertical: [[54, 36, "b2"]],
    red: [7, 92],
    title: [[76, 92, "预埋件"], [77, 115, "L-3形"]],
  },
  {
    name: "L-4形",
    white:
      "M61 17v6M131 17v6M61 20h27M110 20h21M14 124V25H132M61 20V65H14M61 49H132M132 18v15l8 3-16 2 8 3v17M42 65V124M7 124h17l2-5 3 9 1-4h23M42 55v6M14 58h7M36 58h6M54 25v6M54 45v4M51 49h6M4 65h8M4 119h8M8 65v17M8 103v16M36 26l4 5M35 97l9-2",
    cyan: "M21 116V119H17V28H131V31H128M36 116V119H39V46H131V43H128",
    small: [[88, 23, "Ls2"], [27, 23, "2#"], [21, 62, "b1"], [43, 98, "1#"]],
    vertical: [[54, 38, "b2"]],
    red: [8, 93],
    title: [[61, 88, "预留钢筋"], [74, 117, "L-4形"]],
  },
  {
    name: "L-5形",
    white:
      "M61 17v6M131 17v6M61 20h27M110 20h21M14 124V25H132M61 20V65H14M61 49H132M132 18v15l8 3-16 2 8 3v17M42 65V124M7 124h17l2-5 3 9 1-4h23M42 55v6M14 58h7M36 58h6M54 25v6M54 45v4M51 49h6M4 49h8M4 65h8M4 119h8M8 49v33M8 103v16M20 37l-11 17M57 22l3 7M35 97l9-2",
    cyan: "M43 28H131V31H128M43 46H131V43H128M17 49V119H21V116M39 49V119H36V116",
    small: [[88, 23, "Ls2"], [47, 21, "2#"], [21, 62, "b1"], [43, 98, "1#"]],
    vertical: [[54, 38, "b2"]],
    red: [8, 93],
    title: [[77, 92, "植筋"], [74, 117, "L-5形"]],
    tiny: [[21, 36, "植筋"], [21, 46, "深度"]],
  },
  {
    name: "L-6形",
    white:
      "M66 16v9M133 17v6M66 20h67M17 124V25H134M134 49H60M134 19v14l4 2-9 1 5 3v19M44 62V124M17 65h27M9 124h17l2-5 3 9 1-4h18M48 34H26V53M26 66v4H66V34h-4M62 27v21M5 70h10M6 120h8M9 70v14M9 104v16M70 28l3 4M84 46l5 10M42 104l6-2",
    cyan: "M23 116V119H20V28H133V31H130M46 44V46H133V43M39 53H41V119H38V116",
    small: [[90, 17, "Ls2"], [70, 41, "3#"], [88, 65, "2#"], [22, 63, "b1"], [48, 105, "1#"]],
    vertical: [[55, 37, "b2"]],
    red: [10, 94],
    title: [[64, 88, "预留钢筋"], [76, 117, "L-6形"]],
  },
];

const cad = "font-['Liberation_Mono','Noto_Sans_CJK_SC',monospace]";

function Thumb({ d }: { d: Drawing }) {
  return (
    <svg viewBox="0 0 140 140" className={`size-[140px] bg-[#008080] ${cad}`} fill="none" aria-hidden="true">
      <g transform="translate(.5 .5)" shapeRendering="crispEdges">
        <path d={d.white} stroke="#fff" />
      </g>
      <path d={d.cyan} stroke="#0ff" strokeWidth="2" shapeRendering="crispEdges" />
      <g fill="#fff" fontSize="11">
        {d.small.map(([x, y, t]) => (
          <text key={t} x={x} y={y}>{t}</text>
        ))}
        {d.vertical.map(([x, y, t]) => vText(x, y, t, "#fff"))}
        {vText(d.red[0], d.red[1], "Ls1", "#f00", "700")}
      </g>
      <g fill="#fff" fontSize="16" fontWeight="300">
        {d.title.map(([x, y, t]) => (
          <text key={t} x={x} y={y}>{t}</text>
        ))}
      </g>
      {d.tiny && (
        <g fill="#fff" fontSize="10">
          {d.tiny.map(([x, y, t]) => (
            <text key={t} x={x} y={y}>{t}</text>
          ))}
        </g>
      )}
    </svg>
  );
}

function Preview() {
  return (
    <div className="flex h-[206px] justify-center overflow-hidden bg-black">
      <svg viewBox="0 0 702 206" className={`h-[206px] w-[702px] shrink-0 ${cad}`} fill="none" aria-hidden="true">
        <g transform="translate(.5 .5)" shapeRendering="crispEdges">
          <path
            stroke="#fff"
            d="M338 16v10M425 16v10M338 20h18M399 20h26M285 191V35H441M338 35V191M285 82H441M441 26v67M441 48l10 3-19 4 9 4M277 191h70M303 191l4-7 3 13 2-6M259 83h14M259 172h14M262 83v23M262 148v24M361 74v16M330 134h19"
          />
          <path d="M338 20l3-1v2zM425 20l-3-1v2zM262 83l-1 4h2zM262 172l-1-4h2z" fill="#fff" stroke="#fff" />
        </g>
        <path d="M296 45H424V74H297M292 49V172H329V49" stroke="#0ff" strokeWidth="2" shapeRendering="crispEdges" />
        <g fill="#0f0" fontSize="17">
          <text x="358" y="26">1000</text>
          <text x="352" y="109">A6@500</text>
          <text x="352" y="145">A6@500</text>
        </g>
        <text x="263" y="127" transform="rotate(-90 263 127)" textAnchor="middle" dominantBaseline="central" fill="#f00" fontSize="17">
          1000
        </text>
        <text x="360" y="190" fill="#fff" fontSize="26" fontWeight="300">L-1形</text>
      </svg>
    </div>
  );
}

/* ---------- dialog ---------- */

const rows: [string, string][] = [
  ["L型遇框架柱、砼墙", "L-1形"],
  ["L型遇构造柱", "L-3形"],
  ["T型遇框架柱、砼墙", "T-1形"],
  ["T型遇构造柱", "T-3形"],
  ["十字型遇框架柱、砼墙", "十字-1形"],
  ["十字型遇构造柱", "十字-3形"],
  ["一字型遇框架柱、砼墙", "一字-1形"],
  ["一字型遇构造柱", "一字-3形"],
  ["孤墙端部遇柱、砼墙", "一字-4形"],
];

function Dialog() {
  return (
    <div role="dialog" aria-labelledby="dlg-title" className="absolute top-[126px] left-[470px] flex w-[726px] flex-col border-r border-b border-l border-[#b9c6da] bg-[#efefef] text-black">
      <header className="-mx-px flex h-[27px] items-center justify-between bg-[#2d7fe2] px-2 text-white">
        <h1 id="dlg-title">生成砌体加筋</h1>
        <button type="button" className="flex px-0.5">
          <svg viewBox="0 0 8 8" className="size-2" aria-hidden="true">
            <path d="M0 0l8 8M8 0L0 8" stroke="#fff" strokeWidth="1.800" />
          </svg>
        </button>
      </header>
      <div className="flex flex-col px-[11px] pb-[11px]">
        <div className="flex gap-1.5">
          <section className="flex w-[213px] flex-col">
            <h2 className="flex h-[35px] items-center pt-1.5">加筋设置<Colon /></h2>
            <div className="h-[307px] border border-[#c3c6cc] bg-white">
              <table className="w-full table-fixed border-collapse">
                <colgroup>
                  <col className="w-[131px]" />
                  <col />
                </colgroup>
                <thead>
                  <tr className="h-5">
                    <th className="border-r border-b border-[#c3c6cc] bg-[#efefef] p-0 font-normal text-[#333]">设置条件</th>
                    <th className="border-b border-[#c3c6cc] bg-[#7fb8f8] p-0 font-bold text-white">加筋形式</th>
                  </tr>
                </thead>
                <tbody>
                  {rows.map(([cond, form], i) => (
                    <tr key={cond} className="h-[21px]">
                      <td className="border-r border-b border-[#c3c6cc] bg-[#ffffd9] p-0 pl-[3px] whitespace-nowrap">{cond}</td>
                      <td className={`border-b border-[#c3c6cc] p-0 pl-[3px] ${i === 0 ? "outline-1 -outline-offset-1 outline-[#777]" : ""}`}>{form}</td>
                    </tr>
                  ))}
                </tbody>
              </table>
            </div>
          </section>
          <section className="flex min-w-0 flex-1 flex-col">
            <h2 className="flex h-[34px] items-center pt-1.5">节点类型选择<Colon /></h2>
            <div className="flex h-[308px] justify-between overflow-hidden border border-[#c3c6cc] bg-white">
              <div className="grid grid-cols-[153px_153px_153px] grid-rows-[153px_153px]">
                {drawings.map((d, i) => (
                  <button
                    key={d.name}
                    type="button"
                    aria-label={d.name}
                    aria-pressed={i === 0}
                    className={`flex items-center justify-center border-r border-b border-[#c3c6cc] ${i === 0 ? "outline-3 -outline-offset-3 outline-[#2d7fe2]" : ""}`}
                  >
                    <Thumb d={d} />
                  </button>
                ))}
              </div>
              <div className="mt-[13px] mr-0.5 h-[189px] w-2 rounded-full bg-[#cbcbcb]" />
            </div>
          </section>
        </div>
        <h2 className="flex h-[43px] items-center pt-2">当前节点示意图<Colon /></h2>
        <Preview />
        <fieldset>
          <legend className="flex h-[39px] w-full items-center gap-1.5 after:h-px after:flex-1 after:bg-[#c3c3c3]">生成方式</legend>
          <div className="-mt-[5px] flex h-4 items-center pl-[21px]">
            <label className="flex w-[141px] items-center gap-1.5">
              <input type="radio" name="mode" defaultChecked className="size-[15px] appearance-none rounded-full border border-[#8a8a8a] bg-white checked:bg-[#4a9cf5] checked:shadow-[inset_0_0_0_4px_white]" />
              选择图元
            </label>
            <label className="flex items-center gap-1.5">
              <input type="radio" name="mode" className="size-[15px] appearance-none rounded-full border border-[#8a8a8a] bg-white checked:bg-[#4a9cf5] checked:shadow-[inset_0_0_0_4px_white]" />
              选择楼层
            </label>
          </div>
          <label className="flex h-[31px] items-center gap-1.5 pl-[21px]">
            <input type="checkbox" className="size-[15px] appearance-none rounded-xs border border-[#8a8a8a] bg-white checked:bg-[#4a9cf5]" />
            覆盖同位置砌体加筋
          </label>
        </fieldset>
        <footer className="mt-[5px] flex items-start gap-1.5 border-t border-[#c3c3c3] pt-3">
          <p className="mr-auto">注<Colon />加筋形式为空时不生成砌体加筋</p>
          <button type="button" className="h-[26px] w-20 rounded-xs bg-[#2d7fe2] text-white">确定</button>
          <button type="button" className="h-[26px] w-20 rounded-xs border border-[#c5cddb] bg-[#fbfbfb] text-[#222]">取消</button>
        </footer>
      </div>
    </div>
  );
}

function Arrows() {
  return (
    <svg className="pointer-events-none absolute inset-0 size-full" fill="#fb3b3b" aria-hidden="true">
      <path d="M806 241L964 69l-5-3 17-6-4 17-4-3L808 242z" />
      <path d="M131 138l-16 263-4-1 8 17 8-16-4-1 9-262z" />
    </svg>
  );
}

function Combo({ value, name }: { value: string; name: string }) {
  return (
    <div className="relative h-[23px] w-[100px]">
      <select name={name} aria-label={value || name} className="size-full appearance-none border border-[#a3a6aa] bg-white pl-[3px] text-black">
        <option>{value}</option>
      </select>
      <span className="pointer-events-none absolute top-[10px] right-[5px] flex">
        <Caret color="#444" size="h-[3px] w-[5px]" />
      </span>
    </div>
  );
}

const menus = ["开始", "工程设置", "建模", "视图", "工具", "工程量", "云应用"];

export default function App() {
  return (
    <div className="relative flex h-screen flex-col overflow-hidden bg-[#f0f0f0] font-['Noto_Sans','Noto_Sans_CJK_SC',sans-serif] text-[12px] leading-4">
      <nav className="flex h-[22px] shrink-0 bg-white">
        <div className="flex w-[45px] items-start overflow-hidden border-r border-[#d4d4d4] pl-2">
          <svg viewBox="0 0 34 22" className="h-[22px] w-[34px]" aria-hidden="true">
            <path d="M0 0h28v12q0 5-5 5H5q-5 0-5-5z" fill="#1d8cf0" />
            <path d="M0 0h28v5H0z" fill="#2aa0f5" />
            <path d="M12 0h5l2 13q-4 3-8 0z" fill="#e4f5ff" />
            <path d="M14 0h3l2 13-4 2z" fill="#9fd6ff" />
            <path d="M4 5h2M21 4h3M5 12h2M22 11h2" stroke="#7cc8ff" />
            <path d="M32 16v4h-4z" fill="#555" />
          </svg>
        </div>
        <div className="flex flex-1 border-b border-[#d4d4d4] pt-[3px] pl-1">
          {menus.map((m) => (
            <button key={m} type="button" className={`flex h-[18px] items-center px-[13px] pt-0.5 whitespace-nowrap ${m === "建模" ? "rounded-t-xs bg-[#5aa7f8] text-white" : "text-[#333]"}`}>
              {m}
            </button>
          ))}
        </div>
      </nav>
      <Ribbon />
      <div className="flex h-[29px] shrink-0 items-start gap-[5px] border-b border-[#8e9196] bg-[#c9cdd2] pt-[3px] pl-0.5">
        <Combo name="floor" value="首层" />
        <Combo name="category" value="墙" />
        <Combo name="type" value="砌体加筋" />
        <Combo name="item" value="" />
      </div>
      <main className="flex min-h-0 flex-1">
        <Tree />
        <Middle />
        <Canvas />
      </main>
      <Dialog />
      <Arrows />
    </div>
  );
}
